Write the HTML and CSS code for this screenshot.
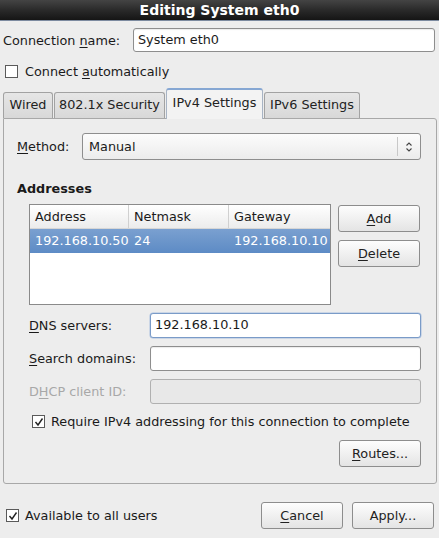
FILE: index.html
```html
<!DOCTYPE html>
<html>
<head>
<meta charset="utf-8">
<link rel="stylesheet" href="styles.css">
</head>
<body>
<div class="window">
  <div class="titlebar">Editing System eth0</div>
  <div class="content">
    <div class="row name-row">
      <span class="label name-label">Connection <u>n</u>ame:</span>
      <div class="entry name-entry">System eth0</div>
    </div>
    <div class="check-row auto-row">
      <span class="checkbox"></span>
      <span>Connect <u>a</u>utomatically</span>
    </div>
    <div class="tabs">
      <div class="tab tab-wired">Wired</div>
      <div class="tab tab-sec">802.1x Security</div>
      <div class="tab active">IPv4 Settings</div>
      <div class="tab tab-v6">IPv6 Settings</div>
    </div>
    <div class="panel">
      <div class="row method-row">
        <span class="label method-label"><u>M</u>ethod:</span>
        <div class="combo">
          <span class="combo-text">Manual</span>
          <span class="combo-sep"></span>
          <svg class="combo-arrow" width="8" height="12" viewBox="0 0 8 12">
            <path d="M1.5 4.5 L4 2 L6.5 4.5 M1.5 7.5 L4 10 L6.5 7.5" fill="none" stroke="#444" stroke-width="1.1"/>
          </svg>
        </div>
      </div>
      <div class="section-title">Addresses</div>
      <div class="addr-block">
        <div class="tree">
          <div class="tree-head">
            <div class="col c1">Address</div>
            <div class="col c2">Netmask</div>
            <div class="col c3">Gateway</div>
          </div>
          <div class="tree-row selected">
            <div class="col c1">192.168.10.50</div>
            <div class="col c2">24</div>
            <div class="col c3">192.168.10.10</div>
          </div>
        </div>
        <div class="addr-buttons">
          <div class="button"><u>A</u>dd</div>
          <div class="button"><u>D</u>elete</div>
        </div>
      </div>
      <div class="form-row dns-row">
        <span class="flabel"><u>D</u>NS servers:</span>
        <div class="entry focused">192.168.10.10</div>
      </div>
      <div class="form-row">
        <span class="flabel"><u>S</u>earch domains:</span>
        <div class="entry"></div>
      </div>
      <div class="form-row disabled">
        <span class="flabel">D<u>H</u>CP client ID:</span>
        <div class="entry insensitive"></div>
      </div>
      <div class="check-row require-row">
        <span class="checkbox checked"><svg width="10" height="10" viewBox="0 0 10 10"><path d="M1.5 5 L4 8 L8.5 1.5" fill="none" stroke="#222" stroke-width="1.4"/></svg></span>
        <span>Require IPv4 addressing for this connection to complete</span>
      </div>
      <div class="routes-row">
        <div class="button"><u>R</u>outes...</div>
      </div>
    </div>
    <div class="bottom-row">
      <div class="check-row all-users">
        <span class="checkbox checked"><svg width="10" height="10" viewBox="0 0 10 10"><path d="M1.5 5 L4 8 L8.5 1.5" fill="none" stroke="#222" stroke-width="1.4"/></svg></span>
        <span>Available to all users</span>
      </div>
      <div class="bottom-buttons">
        <div class="button"><u>C</u>ancel</div>
        <div class="button">Apply...</div>
      </div>
    </div>
  </div>
</div>
</body>
</html>
```
FILE: styles.css
```css
* { box-sizing: border-box; }
html, body { margin: 0; padding: 0; }
body {
  width: 439px;
  height: 538px;
  background: #ededed;
  font-family: "DejaVu Sans", sans-serif;
  font-size: 12.8px;
  color: #1a1a1a;
  overflow: hidden;
}
u { text-decoration: underline; text-underline-offset: 2px; text-decoration-thickness: 1px; }
.window { width: 439px; height: 538px; display: flex; flex-direction: column; }
.titlebar {
  height: 21px;
  background: linear-gradient(#444 0%, #2a2a2a 50%, #151515 100%);
  border-bottom: 1px solid #7d8ba0;
  color: #fff;
  font-weight: bold;
  font-size: 14px;
  text-align: center;
  line-height: 20px;
}
.content { padding: 0 3px; display: flex; flex-direction: column; }
.row { display: flex; align-items: center; }
.name-row { margin-top: 7px; height: 24px; }
.name-label { width: 130px; }
.entry {
  height: 24px;
  background: #fff;
  border: 1px solid #8e8e8e;
  border-radius: 3px;
  padding: 0 4px;
  line-height: 22px;
  box-shadow: inset 0 1px 1px rgba(0,0,0,0.08);
}
.name-entry { flex: 1; margin-right: 1px; }
.check-row { display: flex; align-items: center; gap: 7px; }
.checkbox {
  width: 13px; height: 13px;
  border: 1px solid #5a5a5a;
  background: #fff;
  display: inline-flex; align-items: center; justify-content: center;
  flex: none;
}
.auto-row { margin-top: 10px; height: 18px; padding-left: 2px; }
.tabs { display: flex; align-items: flex-end; margin-top: 8px; height: 30px; position: relative; z-index: 1; }
.tab {
  height: 26px;
  padding: 0 2px;
  line-height: 24px;
  border: 1px solid #a2a2a2;
  border-bottom: none;
  border-radius: 3px 3px 0 0;
  background: linear-gradient(#e6e6e6, #d8d8d8);
  margin-right: 1px;
  color: #222;
  white-space: nowrap;
  text-align: center;
}
.tab-wired { width: 50px; }
.tab-sec { width: 111px; }
.tab.active {
  width: 97px;
  background: #f3f3f3;
  border-top: 2px solid #86a7d3;
  border-color: #a8b4c4;
  border-top-color: #86a7d3;
  line-height: 26px;
  margin-bottom: -1px;
  height: 31px;
}
.tab-v6 { width: 96px; }
.panel {
  height: 366px;
  width: 434px;
  border: 1px solid #a8a8a8;
  border-radius: 0 3px 3px 3px;
  background: #ededed;
  padding: 14px 15px 0 13px;
  display: flex; flex-direction: column;
}
.method-row { height: 27px; }
.method-label { width: 65px; }
.combo {
  flex: 1;
  height: 27px;
  border: 1px solid #8e8e8e;
  border-radius: 3px;
  background: linear-gradient(#fcfcfc, #ececec);
  display: flex; align-items: center;
  padding-left: 6px;
}
.combo-text { flex: 1; }
.combo-sep { width: 1px; height: 19px; background: #c8c8c8; margin-right: 7px; }
.combo-arrow { margin-right: 7px; }
.section-title { font-weight: bold; margin-top: 20px; height: 17px; line-height: 17px; }
.addr-block { display: flex; margin-top: 7px; padding-left: 12px; gap: 7px; }
.tree {
  width: 302px; height: 101px;
  background: #fff;
  border: 1px solid #8a8a8a;
}
.tree-head {
  display: flex; height: 24px;
  background: linear-gradient(#ffffff, #ececec);
  border-bottom: 1px solid #d6d6d6;
}
.tree-head .col { line-height: 23px; border-right: 1px solid #d0d0d0; }
.tree-head .col.c3 { border-right: none; }
.col { padding-left: 5px; white-space: nowrap; }
.c1 { width: 99px; }
.c2 { width: 100px; }
.c3 { flex: 1; }
.tree-row { display: flex; height: 24px; line-height: 23px; }
.tree-row.selected { background: linear-gradient(#7aa0d0, #5d8bc5); color: #fff; }
.addr-buttons { display: flex; flex-direction: column; gap: 8px; margin-top: 1px; }
.button {
  width: 82px; height: 27px;
  border: 1px solid #8d8d8d;
  border-radius: 3px;
  background: linear-gradient(#fdfdfd, #e4e4e4);
  text-align: center;
  line-height: 25px;
  color: #222;
}
.form-row { display: flex; align-items: center; padding-left: 12px; margin-top: 8px; height: 25px; }
.flabel { width: 121px; }
.form-row .entry { width: 271px; height: 25px; }
.entry.focused { border-color: #7a9bc8; box-shadow: 0 0 0 0.5px #a9c0e0; }
.disabled .flabel { color: #a8a8a8; }
.entry.insensitive { background: #e8e8e8; border-color: #b0b0b0; box-shadow: none; }
.require-row { margin-top: 10px; padding-left: 15px; height: 15px; gap: 6px; }
.routes-row { display: flex; justify-content: flex-end; margin-top: 11px; }
.bottom-row { display: flex; align-items: center; justify-content: space-between; margin-top: 18px; height: 27px; }
.all-users { padding-left: 3px; gap: 6px; }
.bottom-buttons { display: flex; gap: 9px; margin-right: 2px; }
```
